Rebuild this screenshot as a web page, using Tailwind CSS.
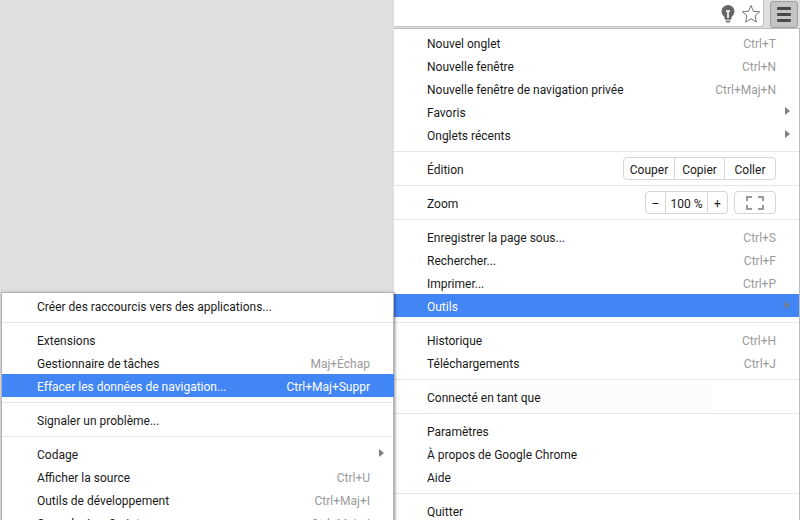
<!DOCTYPE html>
<html lang="fr">
<head>
<meta charset="UTF-8">
<title>Menu Chrome</title>
<script src="https://cdn.jsdelivr.net/npm/@tailwindcss/browser@4"></script>
</head>
<body class="font-['Roboto','Noto_Sans',sans-serif] text-[12px] text-[#1a1a1a] bg-[#dfdfdf]">
<div class="relative flex w-[800px] h-[520px] overflow-hidden">
	<div class="w-[394px] shrink-0 bg-[#dfdfdf]"></div>

	<div class="flex-1 flex flex-col">
		<!-- toolbar -->
		<div class="h-[28px] shrink-0 flex bg-[#dfdfdf]">
			<div class="w-[370px] h-[27px] bg-white border-r border-b border-[#c4c4c4] rounded-br-[3px] flex items-center justify-end gap-[6px] pr-[2px] pt-[2px]">
				<svg width="14" height="18" viewBox="0 0 14 18"><circle cx="7" cy="6.5" r="6.5" fill="#666"/><rect x="3.5" y="11" width="7" height="3" fill="#666"/><rect x="4" y="14" width="6" height="1.5" fill="#999"/><rect x="5" y="16" width="4" height="1.5" fill="#777"/><path d="M5 5h4v2H8v6H6V7H5z" fill="#e2e2e2"/></svg>
				<svg width="20" height="20" viewBox="0 0 20 20"><path d="M10 1.5l2.5 5.8 6.2.5-4.7 4.1 1.4 6.1L10 14.8l-5.4 3.2 1.4-6.1L1.3 7.8l6.2-.5z" fill="#fff" stroke="#757575" stroke-width="1"/></svg>
			</div>
			<div class="ml-[6px] mt-[1px] w-[28px] h-[27px] bg-[#c4c4c4] border border-[#a3a3a3] rounded-[3px] flex flex-col items-center justify-center gap-[3px]">
				<span class="block w-[14px] h-[3px] bg-[#4a4a4a] rounded-[1px]"></span>
				<span class="block w-[14px] h-[3px] bg-[#4a4a4a] rounded-[1px]"></span>
				<span class="block w-[14px] h-[3px] bg-[#4a4a4a] rounded-[1px]"></span>
			</div>
		</div>

		<!-- menu principal -->
		<div class="flex-1 bg-white border-t border-r border-[#bcbcbc]">
			<div class="pt-[2px] pb-[5px]">
				<div class="h-[23px] pt-[2px] pl-[33px] pr-[23px] flex items-center justify-between"><span>Nouvel onglet</span><span class="text-[#9a9a9a]">Ctrl+T</span></div>
				<div class="h-[23px] pt-[2px] pl-[33px] pr-[23px] flex items-center justify-between"><span>Nouvelle fenêtre</span><span class="text-[#9a9a9a]">Ctrl+N</span></div>
				<div class="h-[23px] pt-[2px] pl-[33px] pr-[23px] flex items-center justify-between"><span>Nouvelle fenêtre de navigation privée</span><span class="text-[#9a9a9a]">Ctrl+Maj+N</span></div>
				<div class="relative h-[23px] pt-[2px] pl-[33px] pr-[23px] flex items-center justify-between"><span>Favoris</span><span class="absolute right-[9px] top-[7px] w-0 h-0 border-y-[4px] border-y-transparent border-l-[5px] border-l-[#808080]"></span></div>
				<div class="relative h-[23px] pt-[2px] pl-[33px] pr-[23px] flex items-center justify-between"><span>Onglets récents</span><span class="absolute right-[9px] top-[7px] w-0 h-0 border-y-[4px] border-y-transparent border-l-[5px] border-l-[#808080]"></span></div>
			</div>
			<div class="h-[34px] border-t border-[#e6e6e6] pl-[33px] pr-[23px] flex items-center justify-between">
				<span class="pt-[2px]">Édition</span>
				<div class="flex h-[23px] border border-[#d6d6d6] rounded-[4px]">
					<span class="w-[50px] pt-[2px] flex items-center justify-center">Couper</span>
					<span class="w-[50px] pt-[2px] flex items-center justify-center border-l border-[#d6d6d6]">Copier</span>
					<span class="w-[51px] pt-[2px] flex items-center justify-center border-l border-[#d6d6d6]">Coller</span>
				</div>
			</div>
			<div class="h-[34px] border-t border-[#e6e6e6] pl-[33px] pr-[23px] flex items-center justify-between">
				<span class="pt-[2px]">Zoom</span>
				<div class="flex gap-[6px]">
					<div class="flex h-[23px] border border-[#d6d6d6] rounded-[4px]">
						<span class="w-[19px] pt-[2px] flex items-center justify-center">–</span>
						<span class="w-[43px] pt-[2px] flex items-center justify-center border-x border-[#d6d6d6]">100 %</span>
						<span class="w-[19px] pt-[2px] flex items-center justify-center">+</span>
					</div>
					<div class="w-[42px] h-[23px] border border-[#d6d6d6] rounded-[4px] flex items-center justify-center">
						<svg width="18" height="14" viewBox="0 0 18 14" fill="none" stroke="#9a9a9a" stroke-width="2"><path d="M1 5V1h5M12 1h5v4M17 9v4h-5M6 13H1V9"/></svg>
					</div>
				</div>
			</div>
			<div class="pt-[5px] pb-[5px] border-t border-[#e6e6e6]">
				<div class="h-[23px] pt-[2px] pl-[33px] pr-[23px] flex items-center justify-between"><span>Enregistrer la page sous...</span><span class="text-[#9a9a9a]">Ctrl+S</span></div>
				<div class="h-[23px] pt-[2px] pl-[33px] pr-[23px] flex items-center justify-between"><span>Rechercher...</span><span class="text-[#9a9a9a]">Ctrl+F</span></div>
				<div class="h-[23px] pt-[2px] pl-[33px] pr-[23px] flex items-center justify-between"><span>Imprimer...</span><span class="text-[#9a9a9a]">Ctrl+P</span></div>
				<div class="relative h-[23px] pt-[2px] pl-[33px] pr-[23px] flex items-center justify-between bg-[#4285f4] text-white"><span>Outils</span><span class="absolute right-[9px] top-[7px] w-0 h-0 border-y-[4px] border-y-transparent border-l-[5px] border-l-[#7a7a7a]"></span></div>
			</div>
			<div class="pt-[5px] pb-[5px] border-t border-[#e6e6e6]">
				<div class="h-[23px] pt-[2px] pl-[33px] pr-[23px] flex items-center justify-between"><span>Historique</span><span class="text-[#9a9a9a]">Ctrl+H</span></div>
				<div class="h-[23px] pt-[2px] pl-[33px] pr-[23px] flex items-center justify-between"><span>Téléchargements</span><span class="text-[#9a9a9a]">Ctrl+J</span></div>
			</div>
			<div class="h-[34px] border-t border-[#e6e6e6] pl-[33px] flex items-center">
				<span class="w-[285px] h-[25px] pt-[2px] flex items-center bg-[#fcfcfc]">Connecté en tant que</span>
			</div>
			<div class="pt-[5px] pb-[5px] border-t border-[#e6e6e6]">
				<div class="h-[23px] pt-[2px] pl-[33px] pr-[23px] flex items-center"><span>Paramètres</span></div>
				<div class="h-[23px] pt-[2px] pl-[33px] pr-[23px] flex items-center"><span>À propos de Google Chrome</span></div>
				<div class="h-[23px] pt-[2px] pl-[33px] pr-[23px] flex items-center"><span>Aide</span></div>
			</div>
			<div class="pt-[5px] border-t border-[#e6e6e6]">
				<div class="h-[23px] pt-[2px] pl-[33px] pr-[23px] flex items-center"><span>Quitter</span></div>
			</div>
		</div>
	</div>

	<!-- sous-menu Outils -->
	<div class="absolute left-[1px] top-[292px] w-[393px] h-[240px] bg-white border border-[#b4b4b4] shadow-[1px_1px_3px_rgba(0,0,0,0.45)]">
		<div class="pt-[1px] pb-[5px]">
			<div class="h-[23px] pt-[2px] pl-[35px] pr-[23px] flex items-center"><span>Créer des raccourcis vers des applications...</span></div>
		</div>
		<div class="pt-[5px] pb-[5px] border-t border-[#e6e6e6]">
			<div class="h-[23px] pt-[2px] pl-[35px] pr-[23px] flex items-center justify-between"><span>Extensions</span></div>
			<div class="h-[23px] pt-[2px] pl-[35px] pr-[23px] flex items-center justify-between"><span>Gestionnaire de tâches</span><span class="text-[#9a9a9a]">Maj+Échap</span></div>
			<div class="h-[23px] mr-[-1px] pt-[2px] pl-[35px] pr-[24px] flex items-center justify-between bg-[#4285f4] text-white"><span>Effacer les données de navigation...</span><span>Ctrl+Maj+Suppr</span></div>
		</div>
		<div class="h-[34px] border-t border-[#e6e6e6] pl-[35px] pr-[23px] flex items-center"><span class="pt-[2px]">Signaler un problème...</span></div>
		<div class="pt-[5px] border-t border-[#e6e6e6]">
			<div class="relative h-[23px] pt-[2px] pl-[35px] pr-[23px] flex items-center justify-between"><span>Codage</span><span class="absolute right-[9px] top-[7px] w-0 h-0 border-y-[4px] border-y-transparent border-l-[5px] border-l-[#808080]"></span></div>
			<div class="h-[23px] pt-[2px] pl-[35px] pr-[23px] flex items-center justify-between"><span>Afficher la source</span><span class="text-[#9a9a9a]">Ctrl+U</span></div>
			<div class="h-[23px] pt-[2px] pl-[35px] pr-[23px] flex items-center justify-between"><span>Outils de développement</span><span class="text-[#9a9a9a]">Ctrl+Maj+I</span></div>
			<div class="h-[23px] pt-[2px] pl-[35px] pr-[23px] flex items-center justify-between"><span>Console JavaScript</span><span class="text-[#9a9a9a]">Ctrl+Maj+J</span></div>
		</div>
	</div>
</div>
</body>
</html>
